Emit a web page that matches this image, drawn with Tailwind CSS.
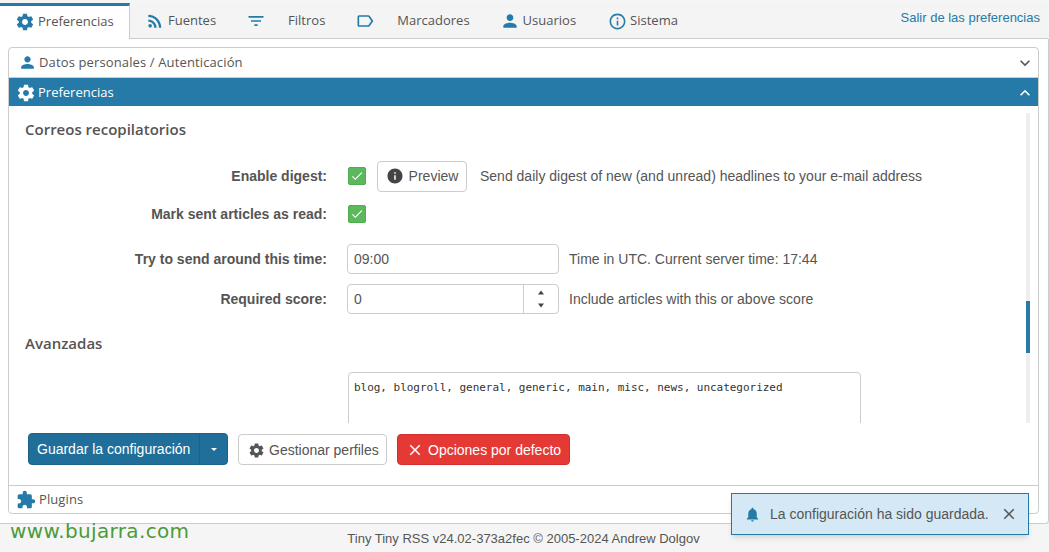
<!DOCTYPE html>
<html lang="es">

<head>
    <meta charset="UTF-8">
    <title>Preferencias - Tiny Tiny RSS</title>
    <script src="https://cdn.jsdelivr.net/npm/@tailwindcss/browser@4"></script>
</head>

<body class="relative w-[1049px] h-[552px] overflow-hidden bg-[#f5f5f5] font-['Liberation_Sans',sans-serif] text-[14px] text-[#555]">
    <div class="flex flex-col h-full pt-[3px]">
        <!-- tabs -->
        <div class="flex h-[36px] shrink-0 border-b border-[#ccc] bg-[#f4f4f4] font-['Open_Sans',sans-serif] text-[13px] mr-[1px]">
            <div class="flex items-center w-[130px] h-[36px] pl-[15px] gap-[3px] pb-[1px] bg-white border-t-[3px] border-r border-t-[#257aa8] border-r-[#ccc]">
                <svg class="w-[20px] h-[20px] fill-[#257aa8]" viewBox="0 0 24 24"><path d="M19.43 12.98c.04-.32.07-.64.07-.98s-.03-.66-.07-.98l2.11-1.65c.19-.15.24-.42.12-.64l-2-3.46c-.12-.22-.39-.3-.61-.22l-2.49 1c-.52-.4-1.08-.73-1.69-.98l-.38-2.65C14.46 2.18 14.25 2 14 2h-4c-.25 0-.46.18-.49.42l-.38 2.65c-.61.25-1.17.59-1.69.98l-2.49-1c-.23-.09-.49 0-.61.22l-2 3.46c-.13.22-.07.49.12.64l2.11 1.65c-.04.32-.07.65-.07.98s.03.66.07.98l-2.11 1.65c-.19.15-.24.42-.12.64l2 3.46c.12.22.39.3.61.22l2.49-1c.52.4 1.08.73 1.69.98l.38 2.65c.03.24.24.42.49.42h4c.25 0 .46-.18.49-.42l.38-2.65c.61-.25 1.17-.59 1.69-.98l2.49 1c.23.09.49 0 .61-.22l2-3.46c.12-.22.07-.49-.12-.64l-2.11-1.65zM12 15.5c-1.93 0-3.5-1.57-3.5-3.5s1.57-3.5 3.5-3.5 3.5 1.57 3.5 3.5-1.57 3.5-3.5 3.5z"/></svg>
                <span>Preferencias</span>
            </div>
            <div class="flex items-center h-[35px] pt-[1px] ml-[15px] gap-[3px]">
                <svg class="w-[20px] h-[20px] fill-[#257aa8]" viewBox="0 0 24 24"><circle cx="6.18" cy="17.82" r="2.18"/><path d="M4 4.44v2.83c7.03 0 12.73 5.7 12.73 12.73h2.83c0-8.59-6.97-15.56-15.56-15.56zm0 5.66v2.83c3.9 0 7.07 3.17 7.07 7.07h2.83c0-5.47-4.43-9.9-9.9-9.9z"/></svg>
                <span>Fuentes</span>
            </div>
            <div class="flex items-center h-[35px] pt-[1px] ml-[30px] gap-[22px]">
                <svg class="w-[20px] h-[20px] fill-[#257aa8]" viewBox="0 0 24 24"><path d="M10 18h4v-2h-4v2zM3 6v2h18V6H3zm3 7h12v-2H6v2z"/></svg>
                <span>Filtros</span>
            </div>
            <div class="flex items-center h-[35px] pt-[1px] ml-[30px] gap-[22px]">
                <svg class="w-[20px] h-[20px] fill-[#257aa8]" viewBox="0 0 24 24"><path d="M17.63 5.84C17.27 5.33 16.67 5 16 5L5 5.01C3.9 5.01 3 5.9 3 7v10c0 1.1.9 1.99 2 1.99L16 19c.67 0 1.27-.33 1.63-.84L22 12l-4.37-6.16zM16 17H5V7h11l3.55 5L16 17z"/></svg>
                <span>Marcadores</span>
            </div>
            <div class="flex items-center h-[35px] pt-[1px] ml-[30px] gap-[3px]">
                <svg class="w-[20px] h-[20px] fill-[#257aa8]" viewBox="0 0 24 24"><path d="M12 12c2.21 0 4-1.79 4-4s-1.79-4-4-4-4 1.79-4 4 1.79 4 4 4zm0 2c-2.67 0-8 1.34-8 4v2h16v-2c0-2.66-5.33-4-8-4z"/></svg>
                <span>Usuarios</span>
            </div>
            <div class="flex items-center h-[35px] pt-[1px] ml-[32px] gap-[3px]">
                <svg class="w-[19px] h-[19px] fill-[#257aa8]" viewBox="0 0 24 24"><path d="M11 17h2v-6h-2v6zm1-15C6.48 2 2 6.48 2 12s4.48 10 10 10 10-4.48 10-10S17.52 2 12 2zm0 18c-4.41 0-8-3.59-8-8s3.59-8 8-8 8 3.59 8 8-3.59 8-8 8zM11 9h2V7h-2v2z"/></svg>
                <span>Sistema</span>
            </div>
            <a class="ml-auto mr-[8px] mt-[7px] font-['Liberation_Sans',sans-serif] text-[13px] leading-[16px] text-[#257aa8]">Salir de las preferencias</a>
        </div>

        <!-- main -->
        <div class="flex-1 min-h-0 bg-white border-b border-r border-[#ccc] rounded-br-[4px] pl-[8px] pr-[9px] pt-[8px]">
            <div class="flex flex-col h-[467px] border border-[#ccc] rounded-[4px] overflow-hidden">
                <div class="flex items-center h-[29px] shrink-0 pl-[9px] pr-[3px] gap-[2px] font-['Open_Sans',sans-serif] text-[13px] tracking-[0.13px]">
                    <svg class="w-[19px] h-[19px] fill-[#257aa8]" viewBox="0 0 24 24"><path d="M12 12c2.21 0 4-1.79 4-4s-1.79-4-4-4-4 1.79-4 4 1.79 4 4 4zm0 2c-2.67 0-8 1.34-8 4v2h16v-2c0-2.66-5.33-4-8-4z"/></svg>
                    <span>Datos personales / Autenticación</span>
                    <svg class="ml-auto w-[20px] h-[20px] fill-[#555]" viewBox="0 0 24 24"><path d="M16.59 8.59L12 13.17 7.41 8.59 6 10l6 6 6-6z"/></svg>
                </div>
                <div class="flex items-center h-[29px] shrink-0 pl-[7px] pr-[3px] pt-[1px] gap-[2px] bg-[#257aa8] text-white border-t border-[#ccc] font-['Open_Sans',sans-serif] text-[13px]">
                    <svg class="w-[20px] h-[20px] fill-white" viewBox="0 0 24 24"><path d="M19.43 12.98c.04-.32.07-.64.07-.98s-.03-.66-.07-.98l2.11-1.65c.19-.15.24-.42.12-.64l-2-3.46c-.12-.22-.39-.3-.61-.22l-2.49 1c-.52-.4-1.08-.73-1.69-.98l-.38-2.65C14.46 2.18 14.25 2 14 2h-4c-.25 0-.46.18-.49.42l-.38 2.65c-.61.25-1.17.59-1.69.98l-2.49-1c-.23-.09-.49 0-.61.22l-2 3.46c-.13.22-.07.49.12.64l2.11 1.65c-.04.32-.07.65-.07.98s.03.66.07.98l-2.11 1.65c-.19.15-.24.42-.12.64l2 3.46c.12.22.39.3.61.22l2.49-1c.52.4 1.08.73 1.69.98l.38 2.65c.03.24.24.42.49.42h4c.25 0 .46-.18.49-.42l.38-2.65c.61-.25 1.17-.59 1.69-.98l2.49 1c.23.09.49 0 .61-.22l2-3.46c.12-.22.07-.49-.12-.64l-2.11-1.65zM12 15.5c-1.93 0-3.5-1.57-3.5-3.5s1.57-3.5 3.5-3.5 3.5 1.57 3.5 3.5-1.57 3.5-3.5 3.5z"/></svg>
                    <span>Preferencias</span>
                    <svg class="ml-auto w-[20px] h-[20px] fill-white" viewBox="0 0 24 24"><path d="M12 8l-6 6 1.41 1.41L12 10.83l4.59 4.58L18 14z"/></svg>
                </div>

                <!-- scroll area -->
                <div class="relative h-[317px] shrink-0 overflow-hidden pl-[16px]">
                    <h3 class="mt-[14px] h-[18px] leading-[18px] font-['Open_Sans',sans-serif] text-[15px] font-semibold">Correos recopilatorios</h3>

                    <div class="flex items-center h-[32px] mt-[22px]">
                        <label class="w-[302px] text-right font-bold">Enable digest:</label>
                        <span class="ml-[21px] flex items-center justify-center w-[18px] h-[18px] rounded-[2px] bg-[#5cb85c] border border-[#4cae4c]">
                            <svg class="w-[14px] h-[14px] fill-white" viewBox="0 0 24 24"><path d="M9 16.17L4.83 12l-1.42 1.41L9 19 21 7l-1.41-1.41z"/></svg>
                        </span>
                        <button class="ml-[11px] flex items-center justify-center gap-[5px] w-[90px] h-[31px] bg-white border border-[#ccc] rounded-[4px]">
                            <svg class="w-[18px] h-[18px] fill-[#444]" viewBox="0 0 24 24"><path d="M12 2C6.48 2 2 6.48 2 12s4.48 10 10 10 10-4.48 10-10S17.52 2 12 2zm1 15h-2v-6h2v6zm0-8h-2V7h2v2z"/></svg>
                            Preview
                        </button>
                        <span class="ml-[13px]">Send daily digest of new (and unread) headlines to your e-mail address</span>
                    </div>
                    <div class="flex items-center h-[32px] mt-[6px]">
                        <label class="w-[302px] text-right font-bold">Mark sent articles as read:</label>
                        <span class="ml-[21px] flex items-center justify-center w-[18px] h-[18px] rounded-[2px] bg-[#5cb85c] border border-[#4cae4c]">
                            <svg class="w-[14px] h-[14px] fill-white" viewBox="0 0 24 24"><path d="M9 16.17L4.83 12l-1.42 1.41L9 19 21 7l-1.41-1.41z"/></svg>
                        </span>
                    </div>
                    <div class="flex items-center h-[30px] mt-[14px]">
                        <label class="w-[302px] text-right font-bold">Try to send around this time:</label>
                        <div class="ml-[20px] flex items-center w-[212px] h-[30px] px-[6px] border border-[#ccc] rounded-[4px]">09:00</div>
                        <span class="ml-[10px]">Time in UTC. Current server time: 17:44</span>
                    </div>
                    <div class="flex items-center h-[30px] mt-[10px]">
                        <label class="w-[302px] text-right font-bold">Required score:</label>
                        <div class="ml-[20px] flex items-center w-[212px] h-[30px] pl-[6px] border border-[#ccc] rounded-[4px]">
                            <span class="flex-1">0</span>
                            <div class="flex flex-col items-center justify-center gap-[8px] w-[35px] h-full border-l border-[#ccc]">
                                <svg class="w-[8px] h-[5px] fill-[#444]" viewBox="0 0 8 5"><path d="M4 .5L1 4.5h6z"/></svg>
                                <svg class="w-[8px] h-[5px] fill-[#444]" viewBox="0 0 8 5"><path d="M4 4.5L1 .5h6z"/></svg>
                            </div>
                        </div>
                        <span class="ml-[10px]">Include articles with this or above score</span>
                    </div>

                    <h3 class="mt-[20px] h-[18px] leading-[18px] font-['Open_Sans',sans-serif] text-[15px] font-semibold">Avanzadas</h3>

                    <div class="ml-[323px] mt-[20px] w-[513px] h-[80px] border border-[#ccc] rounded-[4px] px-[5px] py-[8px] font-['DejaVu_Sans_Mono',monospace] text-[11px] leading-[14px] tracking-[-0.03px] text-[#333]">blog, blogroll, general, generic, main, misc, news, uncategorized</div>

                    <!-- scrollbar -->
                    <div class="absolute right-[8px] top-[7px] bottom-0 w-[4px] bg-[#eee]">
                        <div class="absolute left-0 top-[188px] w-[4px] h-[52px] bg-[#257aa8]"></div>
                    </div>
                </div>

                <!-- buttons -->
                <div class="flex items-start gap-[10px] h-[62px] shrink-0 pl-[19px] pt-[10px]">
                    <div class="flex h-[32px] rounded-[4px] overflow-hidden bg-[#1f6f9a] border border-[#1b6289] text-white">
                        <span class="flex items-center pl-[8px] pt-[1px] w-[170px] whitespace-nowrap">Guardar la configuración</span>
                        <span class="flex items-center justify-center pt-[1px] w-[28px] border-l border-[#1b6289]">
                            <span class="w-0 h-0 border-x-[3.5px] border-x-transparent border-t-[3px] border-t-white"></span>
                        </span>
                    </div>
                    <button class="mt-[1px] flex items-center gap-[4px] pt-[1px] h-[31px] w-[149px] pl-[9px] bg-white border border-[#ccc] rounded-[4px] whitespace-nowrap">
                        <svg class="w-[17px] h-[17px] fill-[#555]" viewBox="0 0 24 24"><path d="M19.43 12.98c.04-.32.07-.64.07-.98s-.03-.66-.07-.98l2.11-1.65c.19-.15.24-.42.12-.64l-2-3.46c-.12-.22-.39-.3-.61-.22l-2.49 1c-.52-.4-1.08-.73-1.69-.98l-.38-2.65C14.46 2.18 14.25 2 14 2h-4c-.25 0-.46.18-.49.42l-.38 2.65c-.61.25-1.17.59-1.69.98l-2.49-1c-.23-.09-.49 0-.61.22l-2 3.46c-.13.22-.07.49.12.64l2.11 1.65c-.04.32-.07.65-.07.98s.03.66.07.98l-2.11 1.65c-.19.15-.24.42-.12.64l2 3.46c.12.22.39.3.61.22l2.49-1c.52.4 1.08.73 1.69.98l.38 2.65c.03.24.24.42.49.42h4c.25 0 .46-.18.49-.42l.38-2.65c.61-.25 1.17-.59 1.69-.98l2.49 1c.23.09.49 0 .61-.22l2-3.46c.12-.22.07-.49-.12-.64l-2.11-1.65zM12 15.5c-1.93 0-3.5-1.57-3.5-3.5s1.57-3.5 3.5-3.5 3.5 1.57 3.5 3.5-1.57 3.5-3.5 3.5z"/></svg>
                        Gestionar perfiles
                    </button>
                    <button class="mt-[1px] flex items-center gap-[4px] pt-[1px] h-[31px] w-[173px] pl-[8px] bg-[#e53935] border border-[#d32f2f] rounded-[4px] text-white whitespace-nowrap">
                        <svg class="w-[18px] h-[18px] fill-white" viewBox="0 0 24 24"><path d="M19 6.41L17.59 5 12 10.59 6.41 5 5 6.41 10.59 12 5 17.59 6.41 19 12 13.41 17.59 19 19 17.59 13.41 12z"/></svg>
                        Opciones por defecto
                    </button>
                </div>

                <div class="flex items-center flex-1 pl-[7px] pt-[1px] gap-[3px] border-t border-[#ccc] font-['Open_Sans',sans-serif] text-[13px] tracking-[0.1px]">
                    <svg class="w-[20px] h-[20px] fill-[#257aa8]" viewBox="0 0 24 24"><path d="M20.5 11H19V7c0-1.1-.9-2-2-2h-4V3.5C13 2.12 11.88 1 10.5 1S8 2.12 8 3.5V5H4c-1.1 0-1.99.9-1.99 2v3.8H3.5c1.49 0 2.7 1.21 2.7 2.7s-1.21 2.7-2.7 2.7H2V20c0 1.1.9 2 2 2h3.8v-1.5c0-1.49 1.21-2.7 2.7-2.7 1.49 0 2.7 1.21 2.7 2.7V22H17c1.1 0 2-.9 2-2v-4h1.5c1.38 0 2.5-1.12 2.5-2.5S21.88 11 20.5 11z"/></svg>
                    <span>Plugins</span>
                </div>
            </div>
        </div>

        <!-- footer -->
        <div class="flex items-center justify-center h-[28px] shrink-0 pt-[2px] pr-[2px] text-[13px]">Tiny Tiny RSS v24.02-373a2fec © 2005-2024 Andrew Dolgov</div>
    </div>

    <!-- watermark -->
    <div class="absolute left-[10px] top-[518px] font-['DejaVu_Sans',sans-serif] text-[20px] leading-[26px] tracking-[0.35px] text-[#4d9a3a]">www.bujarra.com</div>

    <!-- toast -->
    <div class="absolute left-[731px] top-[493px] flex items-center w-[298px] h-[42px] pl-[12px] bg-[#d4e9f5] border border-[#257aa8] shadow-md">
        <svg class="w-[17px] h-[17px] fill-[#257aa8]" viewBox="0 0 24 24"><path d="M12 22c1.1 0 2-.9 2-2h-4c0 1.1.89 2 2 2zm6-6v-5c0-3.07-1.64-5.64-4.5-6.32V4c0-.83-.67-1.5-1.5-1.5s-1.5.67-1.5 1.5v.68C7.63 5.36 6 7.92 6 11v5l-2 2v1h16v-1l-2-2z"/></svg>
        <span class="ml-[9px]">La configuración ha sido guardada.</span>
        <svg class="ml-[11px] w-[18px] h-[18px] fill-[#555]" viewBox="0 0 24 24"><path d="M19 6.41L17.59 5 12 10.59 6.41 5 5 6.41 10.59 12 5 17.59 6.41 19 12 13.41 17.59 19 19 17.59 13.41 12z"/></svg>
    </div>
</body>

</html>
